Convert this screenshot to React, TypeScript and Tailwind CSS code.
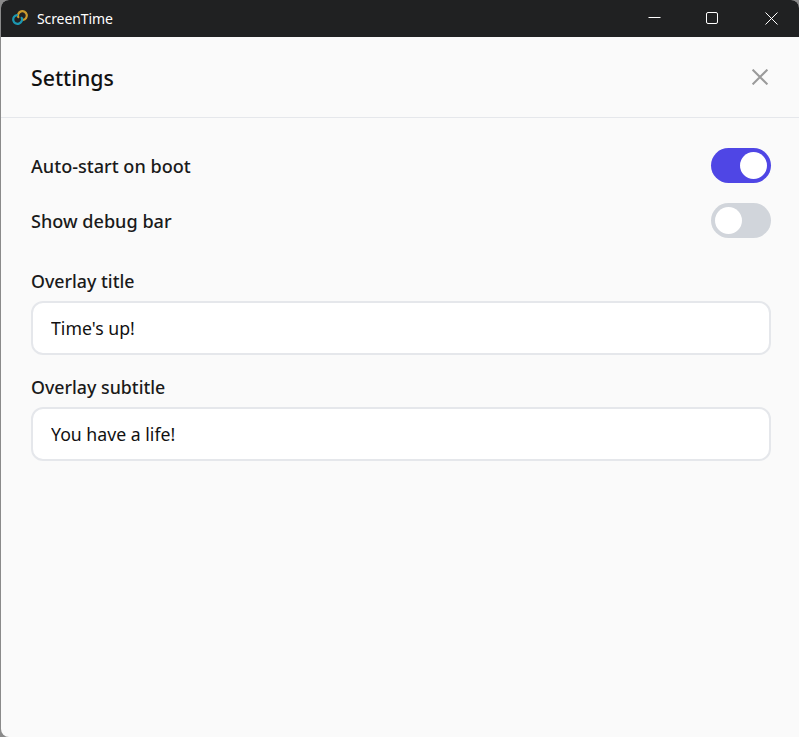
function Logo() {
  return (
    <svg viewBox="0 0 16 17" fill="none" className="w-4 h-[17px] shrink-0 -mt-[2px]">
      <path d="M6.3 8.2A4.4 4.4 0 1 1 11 10.9" stroke="#c99a2e" strokeWidth={2.2} strokeLinecap="round" />
      <path d="M9.7 8.8A4.4 4.4 0 1 1 5 6.1" stroke="#1c97b0" strokeWidth={2.2} strokeLinecap="round" />
    </svg>
  );
}

function TitleBar() {
  return (
    <div className="h-[37px] shrink-0 bg-[#202122] flex items-center text-white">
      <div className="flex items-center gap-[9px] pl-[11px] flex-1">
        <Logo />
        <span className="text-[14px] tracking-[-0.1px] -mt-px">ScreenTime</span>
      </div>
      <div className="flex items-center gap-[2.5px]">
        <div className="w-[56px] flex justify-center">
          <svg viewBox="0 0 13 13" className="w-[13px] h-[13px]"><path d="M0.5 5.5h12" stroke="#fff" strokeWidth={1} /></svg>
        </div>
        <div className="w-[56px] flex justify-center">
          <svg viewBox="0 0 13 13" className="w-[13px] h-[13px]"><rect x="0.5" y="0.5" width="11" height="11" rx="1.5" fill="none" stroke="#fff" strokeWidth={1} /></svg>
        </div>
        <div className="w-[56px] flex justify-center">
          <svg viewBox="0 0 13 13" className="w-[13px] h-[13px]"><path d="M0.5 0.5l12 12M12.5 0.5l-12 12" stroke="#fff" strokeWidth={1} /></svg>
        </div>
      </div>
    </div>
  );
}

function Toggle({ on }: { on: boolean }) {
  return (
    <div className={`w-[60px] h-[35px] rounded-full p-1 flex ${on ? "bg-[#4f46e5] justify-end" : "bg-[#d1d5db] justify-start"}`}>
      <div className="w-[27px] h-[27px] rounded-full bg-white" />
    </div>
  );
}

function ToggleRow({ label, on }: { label: string; on: boolean }) {
  return (
    <div className="h-[35px] flex items-center justify-between">
      <span className="text-[18.1px] font-medium text-[#1a1a1a] leading-[37px] pt-[2px]">{label}</span>
      <Toggle on={on} />
    </div>
  );
}

function Field({ label, value }: { label: string; value: string }) {
  return (
    <div>
      <div className="text-[17.8px] font-medium text-[#1a1a1a] leading-[24px] mb-2">{label}</div>
      <input
        readOnly
        value={value}
        className="block w-full h-[54px] px-[18px] rounded-xl border-2 border-[#e5e7eb] bg-white text-[17.7px] text-[#111] outline-none"
      />
    </div>
  );
}

export default function App() {
  return (
    <div className="w-[799px] h-[737px] bg-[#8a8a8a] overflow-hidden font-['Noto_Sans',sans-serif]">
      <div className="w-[798px] ml-px h-full rounded-t-lg rounded-bl-lg overflow-hidden bg-[#fafafa] flex flex-col">
        <TitleBar />
        <div className="h-[81px] shrink-0 border-b border-[#e5e7eb] flex items-center justify-between pl-[30px] pr-[31px]">
          <h1 className="text-[21.3px] font-medium text-[#111] pt-[2px]">Settings</h1>
          <svg viewBox="0 0 16 16" className="w-4 h-4"><path d="M0.6 0.6l14.8 14.8M15.4 0.6L0.6 15.4" stroke="#9a9a9a" strokeWidth={2} /></svg>
        </div>
        <div className="pt-[30px] pl-[30px] pr-[28px] flex flex-col">
          <div className="flex flex-col gap-5">
            <ToggleRow label="Auto-start on boot" on />
            <ToggleRow label="Show debug bar" on={false} />
          </div>
          <div className="mt-[31px] flex flex-col gap-5">
            <Field label="Overlay title" value="Time's up!" />
            <Field label="Overlay subtitle" value="You have a life!" />
          </div>
        </div>
      </div>
    </div>
  );
}
